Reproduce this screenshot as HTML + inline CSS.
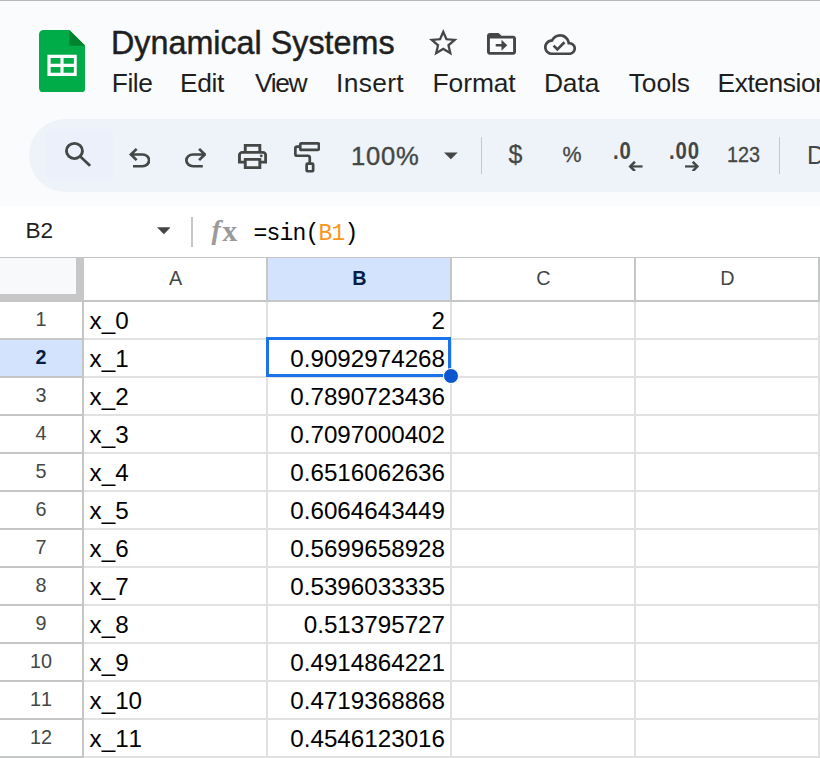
<!DOCTYPE html>
<html lang="en">
<head>
<meta charset="utf-8">
<title>Dynamical Systems</title>
<style>
html,body{margin:0;padding:0;overflow:hidden;}
body{width:820px;height:758px;overflow:hidden;background:#fff;position:relative;font-family:"Liberation Sans",sans-serif;color:#1f1f1f;}
*{box-sizing:border-box;}
.abs{position:absolute;}
#top{position:absolute;left:0;top:0;width:820px;height:206px;background:#f9fbfd;}
#topline{position:absolute;left:0;top:0;width:820px;height:1px;background:#b6b7b9;}
#title{position:absolute;left:111px;top:23px;-webkit-text-stroke:0.450px #1f1f1f;font-size:32.300px;line-height:40px;white-space:nowrap;color:#1f1f1f;}
.menu{position:absolute;top:66.700px;font-size:26.400px;line-height:32px;white-space:nowrap;color:#1f1f1f;}
#pill{position:absolute;left:29px;top:118.800px;width:900px;height:73px;border-radius:36.500px;background:#eef2f9;}
#sbox{position:absolute;left:45px;top:129.300px;width:68.800px;height:50.500px;background:#ebf0fa;border-radius:7px;}
.tb{position:absolute;color:#444746;white-space:nowrap;}
.sep{position:absolute;width:2px;background:#c7c7c7;}
#fbar{position:absolute;left:0;top:206px;width:820px;height:51px;background:#fff;}
#namebox{position:absolute;left:25.500px;top:216px;font-size:22.600px;line-height:30px;color:#1f1f1f;}
#formula{position:absolute;left:253.500px;top:219px;font-family:"Liberation Mono","DejaVu Sans Mono",monospace;font-size:23px;letter-spacing:-0.800px;line-height:30px;color:#000;white-space:pre;}
#formula b{font-weight:normal;color:#f7981d;}
#fx{position:absolute;left:211.500px;top:212px;font-family:"Liberation Serif",serif;font-style:italic;font-weight:bold;font-size:28px;line-height:34px;color:#9a9a9a;white-space:nowrap;}
#fx span{font-style:normal;font-size:30px;margin-left:1.500px;position:relative;top:2px;}
/* grid */
#gtop{position:absolute;left:0;top:257px;width:820px;height:1px;background:#c4c4c4;}
#corner{position:absolute;left:0;top:258px;width:84px;height:42px;background:#f8f9fa;border-right:8px solid #c7c7c7;border-bottom:6px solid #c7c7c7;}
.ch{position:absolute;top:258px;height:44px;width:184px;border-right:2px solid #c4c7c5;border-bottom:2px solid #c4c7c5;background:#fff;text-align:center;font-size:19.8px;line-height:40px;color:#444746;padding-left:1px;}
.ch.sel{background:#d3e3fd;color:#041e49;font-weight:bold;}
.r{position:absolute;left:0;width:820px;height:38px;}
.rh{position:absolute;left:0;top:0;width:84px;height:38px;border-right:2px solid #c4c7c5;border-bottom:2px solid #c4c7c5;background:#fff;text-align:center;font-size:19.800px;line-height:34px;color:#444746;font-kerning:none;}
.rh.sel{background:#d3e3fd;color:#041e49;font-weight:bold;}
.c{position:absolute;top:0;height:38px;width:184px;border-right:2px solid #e1e1e1;border-bottom:2px solid #e1e1e1;font-size:24.200px;line-height:38px;color:#000;white-space:nowrap;overflow:hidden;font-kerning:none;}
.c.a{left:84px;padding-left:5.6px;}
.c.b{left:268px;text-align:right;padding-right:5px;}
.c.cc{left:452px;}
.c.d{left:636px;}
#selbox{position:absolute;left:266px;top:337px;width:185px;height:40px;border:3px solid #1a73e8;}
#handle{position:absolute;left:443px;top:368px;width:16px;height:16px;border-radius:50%;background:#0b57d0;border:1px solid #fff;}
</style>
</head>
<body>
<div id="top"></div>
<div id="fbar"></div>
<div id="topline"></div>
<svg class="abs" style="left:38.650px;top:29.500px" width="46.400" height="62.800" viewBox="0 0 46.400 62.800">
  <path d="M4.400 0H30.400L46.400 15.800V58a4.800 4.800 0 0 1-4.800 4.800H4.800A4.800 4.800 0 0 1 0 58V4.400A4.400 4.400 0 0 1 4.400 0Z" fill="#00ac47"/>
  <path d="M30.400 0L46.400 15.800H30.400Z" fill="#00832d"/>
  <path d="M8.450 24.800H37.750V45.900H8.450ZM11.650 28V33.800H21.450V28ZM24.550 28V33.800H34.850V28ZM11.650 36.900V42.700H21.450V36.900ZM24.550 36.900V42.700H34.850V36.900Z" fill="#ffffff" fill-rule="evenodd"/>
</svg>
<div id="title">Dynamical Systems</div>
<div class="menu" style="left:111.7px;letter-spacing:-0.40px">File</div>
<div class="menu" style="left:180.0px;letter-spacing:-0.37px">Edit</div>
<div class="menu" style="left:254.9px;letter-spacing:-1.33px">View</div>
<div class="menu" style="left:336.0px;letter-spacing:0.32px">Insert</div>
<div class="menu" style="left:432.6px;letter-spacing:-0.10px">Format</div>
<div class="menu" style="left:543.9px;letter-spacing:-0.10px">Data</div>
<div class="menu" style="left:628.8px;letter-spacing:-0.12px">Tools</div>
<div class="menu" style="left:717.5px;letter-spacing:-0.45px">Extensions</div>
<div id="pill"></div>
<div id="sbox"></div>
<!--ICONS-->
<svg class="abs" style="left:429.3px;top:29.3px" width="28.5" height="26.4" viewBox="2 2 20 19" preserveAspectRatio="none"><path fill="#444746" d="M22 9.240l-7.190-.620L12 2 9.190 8.630 2 9.240l5.460 4.730L5.820 21 12 17.270 18.180 21l-1.630-7.030L22 9.240zM12 15.400l-3.760 2.270 1-4.280-3.320-2.880 4.380-.380L12 6.100l1.710 4.040 4.380.380-3.320 2.880 1 4.280L12 15.400z"/></svg>
<svg class="abs" style="left:487.4px;top:32.900px" width="29" height="21.800" viewBox="2 4 20 16" preserveAspectRatio="none"><path fill="#444746" d="M20 6h-8l-2-2H4c-1.100 0-2 .900-2 2v12c0 1.100.900 2 2 2h16c1.100 0 2-.900 2-2V8c0-1.100-.900-2-2-2zm0 12H4V8h16v10zm-8.010-1l4-4-4-4v3H8v2h3.990v3z"/></svg>
<svg class="abs" style="left:543.900px;top:33.500px" width="32.100" height="21.100" viewBox="0 4 24 16" preserveAspectRatio="none"><path fill="#444746" d="M19.350 10.040C18.670 6.590 15.640 4 12 4 9.110 4 6.600 5.640 5.350 8.040 2.340 8.360 0 10.910 0 14c0 3.310 2.690 6 6 6h13c2.760 0 5-2.240 5-5 0-2.640-2.050-4.780-4.650-4.960zM19 18H6c-2.210 0-4-1.790-4-4 0-2.050 1.530-3.760 3.560-3.970l1.070-.110.500-.950C8.080 7.140 9.940 6 12 6c2.620 0 4.880 1.860 5.390 4.430l.300 1.500 1.530.110c1.560.100 2.780 1.410 2.780 2.960 0 1.650-1.350 3-3 3zm-9-3.820l-2.090-2.090L6.500 13.500 10 17l6.010-6.010-1.410-1.410z"/></svg>
<svg class="abs" style="left:64.800px;top:142.300px" width="26.100" height="24.800" viewBox="3 3 18 18" preserveAspectRatio="none"><path fill="#444746" d="M19.600 21l-6.300-6.300q-.750.600-1.725.950T9.500 16q-2.725 0-4.612-1.888T3 9.500q0-2.725 1.888-4.612T9.500 3q2.725 0 4.613 1.888T16 9.500q0 1.100-.350 2.075T14.700 13.300l6.300 6.300-1.400 1.400ZM9.500 14q1.875 0 3.188-1.313T14 9.500q0-1.875-1.312-3.188T9.500 5Q7.625 5 6.312 6.313T5 9.500q0 1.875 1.313 3.188T9.500 14Z"/></svg>
<svg class="abs" style="left:128.800px;top:148px" width="21.400" height="19.500" viewBox="4 4 16 15" preserveAspectRatio="none"><path fill="#444746" d="M7 19v-2h7.100q1.575 0 2.738-1T18 13.500q0-1.500-1.162-2.500T14.100 10H7.800l2.600 2.600L9 14 4 9l5-5 1.400 1.400L7.800 8h6.300q2.425 0 4.163 1.575T20 13.500q0 2.350-1.737 3.925T14.100 19H7Z"/></svg>
<svg class="abs" style="left:184.600px;top:148px" width="21.900" height="19.500" viewBox="4 4 16 15" preserveAspectRatio="none"><path fill="#444746" d="M9.900 19q-2.425 0-4.163-1.575T4 13.500q0-2.350 1.737-3.925T9.900 8h6.300l-2.600-2.600L15 4l5 5-5 5-1.400-1.400 2.600-2.600H9.900q-1.575 0-2.738 1T6 13.500q0 1.500 1.162 2.500T9.900 17H17v2H9.900Z"/></svg>
<svg class="abs" style="left:237.900px;top:143.900px" width="29.100" height="25" viewBox="2 3 20 18" preserveAspectRatio="none"><path fill="#444746" d="M16 8V5H8v3H6V3h12v5h-2ZM18 12.500q.425 0 .713-.288T19 11.500q0-.425-.287-.713T18 10.500q-.425 0-.713.287T17 11.500q0 .425.287.712T18 12.500ZM16 19v-4H8v4h8Zm2 2H6v-4H2v-6q0-1.275.875-2.138T5 8h14q1.275 0 2.138.862T22 11v6h-4v4Zm2-6v-4q0-.425-.287-.713T19 10H5q-.425 0-.713.287T4 11v4h2v-2h12v2h2Z"/></svg>
<svg class="abs" style="left:293.900px;top:142.200px" width="26.300" height="30.600" viewBox="0 0 26.300 30.600"><g fill="none" stroke="#444746" stroke-width="2.700" stroke-linejoin="round"><rect x="6.250" y="1.350" width="18.700" height="6.500" rx="1.200"/><path d="M6.250 4.600H3.200q-1.850 0-1.850 1.850V11.900q0 1.850 1.850 1.850H13.900q1.850 0 1.850 1.850V21"/><rect x="12.650" y="21.600" width="6.500" height="7.650" rx="0.800"/></g></svg>
<svg class="abs" style="left:444.400px;top:152.300px" width="13.700" height="7.800" viewBox="0 0 14 7"><path fill="#444746" d="M0 0H14L7 7Z"/></svg>
<svg class="abs" style="left:156.600px;top:227.400px" width="13.700" height="7.500" viewBox="0 0 14 7"><path fill="#444746" d="M0 0H14L7 7Z"/></svg>
<svg class="abs" style="left:628.300px;top:160.500px" width="14.600" height="10.900" viewBox="0 0 14.600 10.900"><g fill="none" stroke="#444746"><path stroke-width="2.200" d="M14.600 5.450H2.500"/><path stroke-width="2.500" d="M6.900 0.750L2.200 5.450L6.900 10.150"/></g></svg>
<svg class="abs" style="left:684.900px;top:160.500px" width="14.600" height="10.900" viewBox="0 0 14.600 10.900"><g fill="none" stroke="#444746"><path stroke-width="2.200" d="M0 5.450H12.100"/><path stroke-width="2.500" d="M7.700 0.750L12.400 5.450L7.700 10.150"/></g></svg>
<!--/ICONS-->
<div class="tb" style="left:351px;top:140px;font-size:25.600px;line-height:32px;letter-spacing:0.800px;-webkit-text-stroke:0.350px #444746">100%</div>
<div class="tb" style="left:508.600px;top:137.500px;font-size:25px;line-height:32px;-webkit-text-stroke:0.250px #444746">$</div>
<div class="tb" style="left:561px;top:138.500px;font-size:22.500px;line-height:32px;width:22px;text-align:center;transform:scaleX(0.950);-webkit-text-stroke:0.300px #444746">%</div>
<div class="tb" style="left:613px;top:135.300px;font-size:23.500px;line-height:32px;font-weight:bold;letter-spacing:1.100px;transform:scaleX(0.865);transform-origin:0 0">.0</div>
<div class="tb" style="left:669.200px;top:135.300px;font-size:23.500px;line-height:32px;font-weight:bold;letter-spacing:1.100px;transform:scaleX(0.865);transform-origin:0 0">.00</div>
<div class="tb" style="left:724px;top:139px;font-size:22px;line-height:32px;width:39px;text-align:center;transform:scaleX(0.900);-webkit-text-stroke:0.300px #444746">123</div>
<div class="tb" style="left:807px;top:139px;font-size:25px;line-height:32px">Default</div>
<div class="sep" style="left:481px;top:137px;height:37px;width:1px"></div>
<div class="sep" style="left:779px;top:137px;height:37px;width:1px"></div>
<div id="namebox">B2</div>
<div class="sep" style="left:191px;top:217px;height:30px;width:1.500px"></div>
<div id="fx">f<span>x</span></div>
<div id="formula">=sin(<b>B1</b>)</div>
<div id="gtop"></div>
<div id="corner"></div>
<div class="abs" style="left:0;top:300px;width:84px;height:2px;background:#c4c7c5"></div>
<div class="ch" style="left:84px">A</div>
<div class="ch sel" style="left:268px">B</div>
<div class="ch" style="left:452px">C</div>
<div class="ch" style="left:636px">D</div>
<div class="r" style="top:302px"><div class="rh">1</div><div class="c a">x_0</div><div class="c b">2</div><div class="c cc"></div><div class="c d"></div></div>
<div class="r" style="top:340px"><div class="rh sel">2</div><div class="c a">x_1</div><div class="c b">0.9092974268</div><div class="c cc"></div><div class="c d"></div></div>
<div class="r" style="top:378px"><div class="rh">3</div><div class="c a">x_2</div><div class="c b">0.7890723436</div><div class="c cc"></div><div class="c d"></div></div>
<div class="r" style="top:416px"><div class="rh">4</div><div class="c a">x_3</div><div class="c b">0.7097000402</div><div class="c cc"></div><div class="c d"></div></div>
<div class="r" style="top:454px"><div class="rh">5</div><div class="c a">x_4</div><div class="c b">0.6516062636</div><div class="c cc"></div><div class="c d"></div></div>
<div class="r" style="top:492px"><div class="rh">6</div><div class="c a">x_5</div><div class="c b">0.6064643449</div><div class="c cc"></div><div class="c d"></div></div>
<div class="r" style="top:530px"><div class="rh">7</div><div class="c a">x_6</div><div class="c b">0.5699658928</div><div class="c cc"></div><div class="c d"></div></div>
<div class="r" style="top:568px"><div class="rh">8</div><div class="c a">x_7</div><div class="c b">0.5396033335</div><div class="c cc"></div><div class="c d"></div></div>
<div class="r" style="top:606px"><div class="rh">9</div><div class="c a">x_8</div><div class="c b">0.513795727</div><div class="c cc"></div><div class="c d"></div></div>
<div class="r" style="top:644px"><div class="rh">10</div><div class="c a">x_9</div><div class="c b">0.4914864221</div><div class="c cc"></div><div class="c d"></div></div>
<div class="r" style="top:682px"><div class="rh">11</div><div class="c a">x_10</div><div class="c b">0.4719368868</div><div class="c cc"></div><div class="c d"></div></div>
<div class="r" style="top:720px"><div class="rh">12</div><div class="c a">x_11</div><div class="c b">0.4546123016</div><div class="c cc"></div><div class="c d"></div></div>
<div id="selbox"></div>
<div id="handle"></div>
</body>
</html>
